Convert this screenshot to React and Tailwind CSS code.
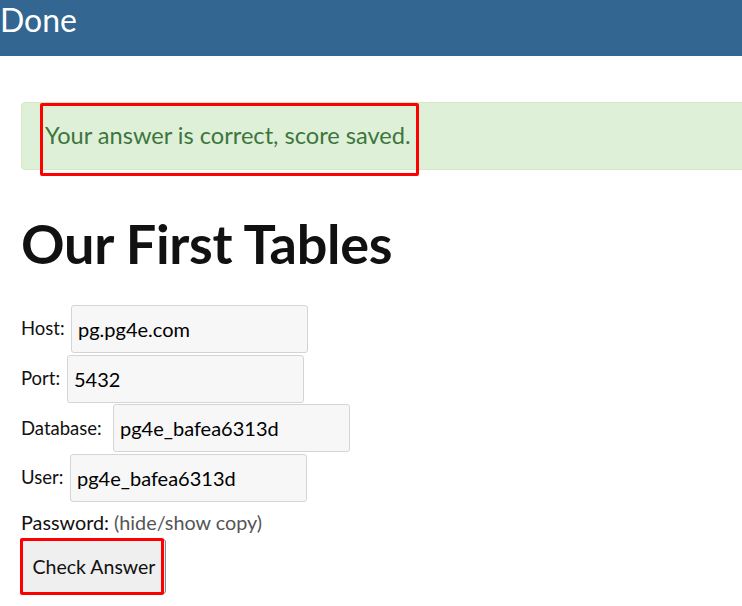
import React from "react";

const fields = [
  { label: "Host:", value: "pg.pg4e.com", w: "w-[50px]" },
  { label: "Port:", value: "5432", w: "w-[46px]" },
  { label: "Database:", value: "pg4e_bafea6313d", w: "w-[92px]" },
  { label: "User:", value: "pg4e_bafea6313d", w: "w-[49px]" },
];

const FieldRow = ({ label, value, w }) => (
  <div className="flex items-center h-[48px]">
    <label className={`${w} shrink-0 text-[18.5px]`}>{label}</label>
    <input
      readOnly
      value={value}
      className="w-[237px] h-[48px] px-[6px] text-[20px] text-black bg-[#f7f7f7] border border-[#d4d4d4] rounded-[3px] outline-none"
    />
  </div>
);

export default function App() {
  return (
    <div className="w-[742px] h-[606px] overflow-hidden bg-white text-[#111] font-['Lato','Open_Sans',sans-serif]">
      {/* Header */}
      <header className="h-[56px] bg-[#336690] text-white">
        <h1 className="text-[32px] leading-[40px] font-normal">Done</h1>
      </header>

      <div className="px-[21px]">
        {/* Alert */}
        <div className="relative mt-[46px] w-[800px] h-[68px] flex items-center pl-[23px] bg-[#dff0d8] border border-[#d6e9c6] rounded-[4px] text-[#3c763d] text-[23.6px]">
          Your answer is correct, score saved.
          <div className="absolute left-[18px] top-0 w-[379px] h-[73px] border-[3px] border-[#ff0000] rounded-[2px]" />
        </div>

        <h2 className="mt-[44px] text-[54px] leading-[60px] font-bold text-[#111] tracking-[-0.3px]">
          Our First Tables
        </h2>

        <div className="mt-[31px] flex flex-col gap-[1.7px]">
          {fields.map((f) => (
            <FieldRow key={f.label} {...f} />
          ))}
        </div>

        <p className="mt-[8px] text-[19.8px] leading-[24px]">
          Password: <span className="text-[#555]">(hide/show copy)</span>
        </p>

        <div className="relative mt-[5px] w-[145px]">
          <button className="w-[144px] h-[55px] ml-[1px] text-[19.5px] text-[#111] bg-[#efefef] border border-[#888] rounded-[3px]">
            Check Answer
          </button>
          <div className="absolute left-[-1px] top-[-1px] w-[144px] h-[57px] border-[3px] border-[#ff0000] rounded-[2px]" />
        </div>
      </div>
    </div>
  );
}
